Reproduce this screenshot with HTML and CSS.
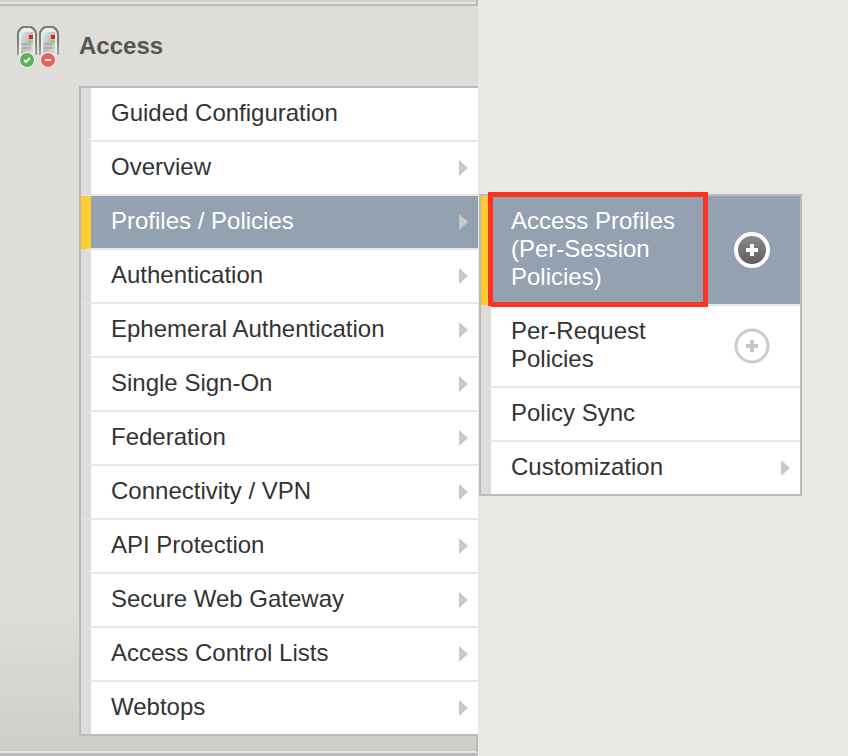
FILE: index.html
```html
<!DOCTYPE html>
<html lang="en">
<head>
<meta charset="utf-8">
<title>Access</title>
<meta name="viewport" content="width=device-width, initial-scale=1">
<link rel="stylesheet" href="styles.css">
</head>
<body>
<div class="sidebar">
  <div class="section-edge"></div>
  <nav class="section" aria-labelledby="access-title">
    <h2 class="section-title">
      <svg class="section-icon" viewBox="0 0 48 46" aria-hidden="true">
        <defs>
          <linearGradient id="metal" x1="0" y1="0" x2="1" y2="1">
            <stop offset="0" stop-color="#e6e6e6"/>
            <stop offset="0.5" stop-color="#bdbdbd"/>
            <stop offset="1" stop-color="#dedede"/>
          </linearGradient>
          <linearGradient id="frame" x1="0" y1="0" x2="0" y2="1">
            <stop offset="0.5" stop-color="#7c7c7a"/>
            <stop offset="1" stop-color="#a4a4a2"/>
          </linearGradient>
          <g id="server">
            <path d="M1 32V10L7 4H15L21 10V32Z" fill="#ececea"/>
            <path d="M2 32V10Q3 6 7 4H15Q19 6 20 10V32" fill="none" stroke="url(#frame)" stroke-width="2"/>
            <path d="M5 9H17V31H5Z" fill="url(#metal)"/>
            <path d="M6 21H15M6 25H15" stroke="#9c9c9c" stroke-width="1"/>
            <path d="M13 12H17V16H13Z" fill="#e3232c"/>
            <path d="M13 17H17V20H13Z" fill="#7fe04f"/>
          </g>
        </defs>
        <use href="#server" x="1"/>
        <use href="#server" x="23"/>
        <circle cx="12" cy="37" r="8" fill="#efefed"/>
        <circle cx="12" cy="37" r="7" fill="#59b057"/>
        <path d="M9 37L11 39L15 35" fill="none" stroke="#fff" stroke-width="2"/>
        <circle cx="33" cy="37" r="8" fill="#efefed"/>
        <circle cx="33" cy="37" r="7" fill="#e9635c"/>
        <path d="M30 37H36" stroke="#fff" stroke-width="2"/>
      </svg>
      <span id="access-title">Access</span>
    </h2>
    <ul class="menu">
      <li class="item"><a href="#guided">Guided Configuration</a></li>
      <li class="item more"><a href="#overview">Overview</a></li>
      <li class="item more active">
        <a href="#profiles">Profiles / Policies</a>
        <ul class="menu submenu">
          <li class="item active highlighted">
            <a href="#access-profiles">Access Profiles (Per-Session Policies)</a>
            <button class="add" type="button" aria-label="Create access profile">
              <svg viewBox="0 0 36 36" aria-hidden="true">
                <defs>
                  <linearGradient id="disc" x1="0" y1="0" x2="0" y2="1">
                    <stop offset="0" stop-color="#8c8c8c"/>
                    <stop offset="1" stop-color="#5c5c5c"/>
                  </linearGradient>
                </defs>
                <circle cx="18" cy="18" r="16" fill="url(#disc)" stroke="#fff" stroke-width="4"/>
                <path d="M18 12V24M12 18H24" stroke="#fff" stroke-width="4"/>
              </svg>
            </button>
          </li>
          <li class="item">
            <a href="#per-request">Per-Request Policies</a>
            <button class="add" type="button" aria-label="Create per-request policy">
              <svg viewBox="0 0 36 36" aria-hidden="true">
                <circle cx="18" cy="18" r="16" fill="#fff" stroke="#cbcbcb" stroke-width="3"/>
                <path d="M18 12V24M12 18H24" stroke="#c6c6c6" stroke-width="4"/>
              </svg>
            </button>
          </li>
          <li class="item"><a href="#policy-sync">Policy Sync</a></li>
          <li class="item more"><a href="#customization">Customization</a></li>
        </ul>
      </li>
      <li class="item more"><a href="#authentication">Authentication</a></li>
      <li class="item more"><a href="#ephemeral">Ephemeral Authentication</a></li>
      <li class="item more"><a href="#sso">Single Sign-On</a></li>
      <li class="item more"><a href="#federation">Federation</a></li>
      <li class="item more"><a href="#connectivity">Connectivity / VPN</a></li>
      <li class="item more"><a href="#api">API Protection</a></li>
      <li class="item more"><a href="#swg">Secure Web Gateway</a></li>
      <li class="item more"><a href="#acl">Access Control Lists</a></li>
      <li class="item more"><a href="#webtops">Webtops</a></li>
    </ul>
    <div class="section-foot"></div>
  </nav>
</div>
</body>
</html>
```
FILE: styles.css
```css
* {
  box-sizing: border-box;
}

body {
  margin: 0;
  min-height: 100vh;
  display: flex;
  background: #e9e8e4;
  color: #333;
  font: 24px/28px "Liberation Sans", Arial, sans-serif;
}

.sidebar {
  flex: 0 0 478px;
  display: flex;
  flex-direction: column;
  background: #bbb;
}

.section-edge {
  height: 6px;
  background: linear-gradient(#d0cfcb 50%, #e6e5e2 50%);
  border-right: 2px solid #bbb;
  border-bottom: 2px solid #bbb;
}

.section {
  background: linear-gradient(#deddd9 80%, #cfcecb);
}

.section-foot {
  height: 17px;
  border-right: 2px solid #bbb;
  border-bottom: 2px solid #e6e5e2;
}

.section-title {
  display: flex;
  align-items: center;
  gap: 16px;
  height: 80px;
  margin: 0;
  padding: 0 15px;
  color: #555;
  font-size: 24px;
}

.section-icon {
  width: 48px;
  height: 46px;
}

.menu {
  margin: 0;
  padding: 0;
  list-style: none;
  border: 2px solid #bbb;
  background: #fff;
}

.section > .menu {
  margin-left: 79px;
  border-right: 0;
}

.item {
  position: relative;
  display: flex;
  align-items: center;
  border-left: 10px solid #dcdcdc;
  border-bottom: 2px solid #e6e6e6;
}

.item:last-child {
  border-bottom: 0;
}

.item > a {
  flex: 1;
  padding: 11px 20px 13px;
  color: #333;
  text-decoration: none;
}

.active {
  border-left-color: #fdcc30;
  background: #94a1b0;
  background-clip: padding-box;
}

.item.active > a {
  color: #fff;
}

.more::after {
  content: "";
  margin-right: 10px;
  border: solid transparent;
  border-width: 8px 0 8px 9px;
  border-left-color: #c9c9c9;
}

.submenu {
  position: absolute;
  top: -2px;
  left: calc(100% + 1px);
  width: 323px;
}

.add {
  display: flex;
  margin: 0 30px 0 0;
  padding: 0;
  border: 0;
  background: none;
}

.add svg {
  width: 36px;
  height: 36px;
}

/* Callout frame around the link, over the item's edges */
.highlighted::before {
  content: "";
  position: absolute;
  inset: -4px 92px -3px -3px;
  border: 5px solid #fc3422;
}
```
